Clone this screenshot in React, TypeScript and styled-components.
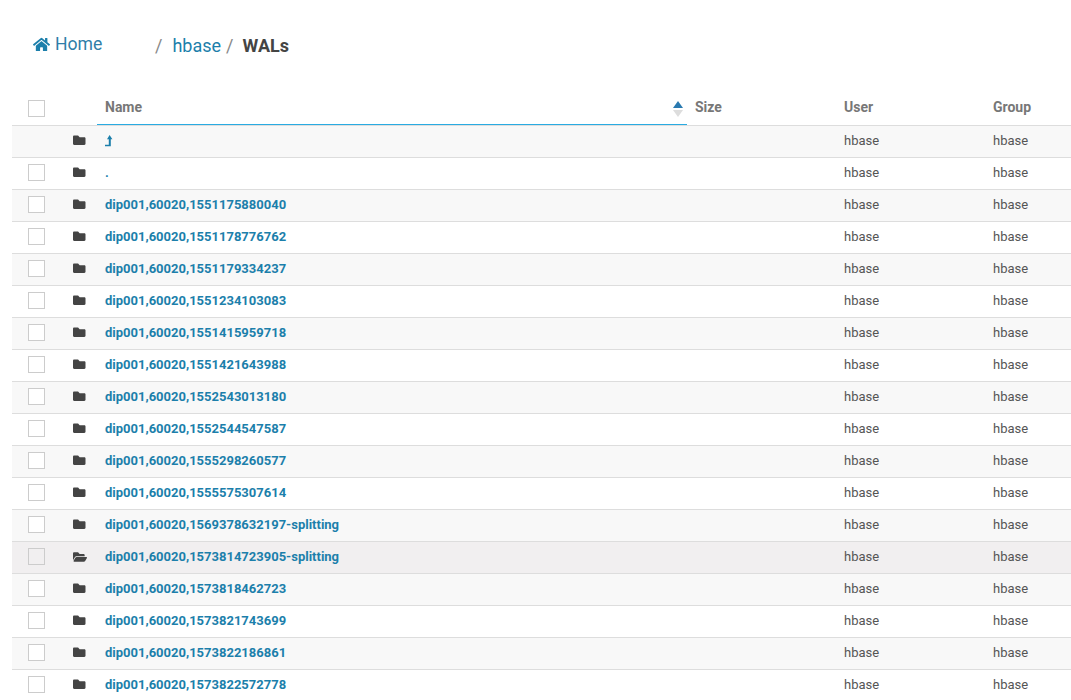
import React from "react";
import styled, { createGlobalStyle } from "styled-components";
import { FaHome, FaFolder, FaFolderOpen } from "react-icons/fa";

const GlobalStyle = createGlobalStyle`
  html, body {
    margin: 0;
    padding: 0;
    background: #fff;
    overflow: hidden;
    font-family: Roboto, "Liberation Sans", sans-serif;
    color: #444;
  }
`;

const Page = styled.div`
  height: 700px;
  overflow: hidden;
  padding: 0 0 0 12px;
`;

const Breadcrumb = styled.nav`
  display: flex;
  height: 95px;
  font-size: 18px;
  color: #777;
`;

const HomeLink = styled.a`
  display: flex;
  align-items: center;
  gap: 5px;
  width: 122px;
  height: 20px;
  margin: 34px 0 0 21px;
  font-size: 17.6px;
  color: #2f7ea8;
`;

const Crumbs = styled.div`
  display: flex;
  align-items: center;
  height: 21px;
  margin-top: 35px;
`;

const Slash = styled.span<{ $gap: number; $lead?: number }>`
  margin-left: ${(p) => p.$lead ?? 0}px;
  margin-right: ${(p) => p.$gap}px;
  color: #888;
`;

const CrumbLink = styled.a`
  color: #1c7fab;
`;

const Current = styled.strong`
  font-weight: 700;
  color: #444;
`;

const Row = styled.div<{ $stripe?: boolean; $hover?: boolean }>`
  display: grid;
  grid-template-columns: 49px 36px 590px 149px 149px 86px;
  align-items: center;
  height: 29px;
  padding-bottom: 2px;
  border-bottom: 1px solid #ddd;
  font-size: 13px;
  background: ${(p) => (p.$hover ? "#f1eff0" : p.$stripe ? "#f8f8f8" : "#fff")};
`;

const HeadRow = styled(Row)`
  grid-template-rows: 24px;
  height: 24px;
  padding-bottom: 6px;
  font-size: 14px;
`;

const CheckCell = styled.div<{ $head?: boolean }>`
  display: flex;
  padding-left: 16px;
  padding-top: ${(p) => (p.$head ? "3px" : "0")};
`;

const CheckBox = styled.span<{ $dim?: boolean }>`
  display: block;
  width: 15px;
  height: 15px;
  border: 1px solid #ccc;
  background: ${(p) => (p.$dim ? "transparent" : "#fff")};
`;

const IconCell = styled.div`
  display: flex;
  padding-left: 12px;
  color: #444;
  font-size: 12.5px;
`;

const HeadName = styled.div`
  position: relative;
  box-sizing: border-box;
  align-self: start;
  display: flex;
  align-items: center;
  height: 30px;
  padding: 0 0 6px 8px;
  font-weight: 700;
  color: #777;
  border-bottom: 1px solid #29abe2;
`;

const HeadCell = styled.div`
  padding-left: 8px;
  font-weight: 700;
  color: #777;
`;

const SortIcon = styled.svg`
  position: absolute;
  right: 4px;
  top: 6px;
`;

const NameCell = styled.a`
  display: flex;
  align-items: center;
  padding-left: 8px;
  font-weight: 700;
  color: #1c7fab;
`;

const Cell = styled.div`
  padding-left: 8px;
  color: #555;
`;

const names = [
  "dip001,60020,1551175880040",
  "dip001,60020,1551178776762",
  "dip001,60020,1551179334237",
  "dip001,60020,1551234103083",
  "dip001,60020,1551415959718",
  "dip001,60020,1551421643988",
  "dip001,60020,1552543013180",
  "dip001,60020,1552544547587",
  "dip001,60020,1555298260577",
  "dip001,60020,1555575307614",
  "dip001,60020,1569378632197-splitting",
  "dip001,60020,1573814723905-splitting",
  "dip001,60020,1573818462723",
  "dip001,60020,1573821743699",
  "dip001,60020,1573822186861",
  "dip001,60020,1573822572778",
];

const LevelUpIcon = () => (
  <svg width="9" height="12" viewBox="0 0 9 12" fill="currentColor">
    <path d="M4.6 0 L7.4 4.2 L5.8 4.2 L5.8 11.2 L0 11.2 L0 9.8 L3.8 9.8 L3.8 4.2 L2 4.2 Z" />
  </svg>
);

export default function App() {
  return (
    <Page>
      <GlobalStyle />
      <Breadcrumb>
        <HomeLink>
          <FaHome size={17} color="#1c7fab" />
          Home
        </HomeLink>
        <Crumbs>
          <Slash $gap={10}>/</Slash>
          <CrumbLink>hbase</CrumbLink>
          <Slash $gap={9} $lead={5}>/</Slash>
          <Current>WALs</Current>
        </Crumbs>
      </Breadcrumb>

      <HeadRow>
        <CheckCell $head>
          <CheckBox />
        </CheckCell>
        <div />
        <HeadName>
          Name
          <SortIcon width="10" height="16" viewBox="0 0 10 16">
            <path d="M5 0 L10 7 L0 7 Z" fill="#2a7ab0" />
            <path d="M0 9 L10 9 L5 16 Z" fill="#ddd" />
          </SortIcon>
        </HeadName>
        <HeadCell>Size</HeadCell>
        <HeadCell>User</HeadCell>
        <HeadCell>Group</HeadCell>
      </HeadRow>

      <Row $stripe>
        <div />
        <IconCell>
          <FaFolder />
        </IconCell>
        <NameCell>
          <LevelUpIcon />
        </NameCell>
        <div />
        <Cell>hbase</Cell>
        <Cell>hbase</Cell>
      </Row>

      <Row>
        <CheckCell>
          <CheckBox />
        </CheckCell>
        <IconCell>
          <FaFolder />
        </IconCell>
        <NameCell>.</NameCell>
        <div />
        <Cell>hbase</Cell>
        <Cell>hbase</Cell>
      </Row>

      {names.map((name, i) => {
        const hover = name.startsWith("dip001,60020,1573814723905");
        return (
          <Row key={name} $stripe={i % 2 === 0} $hover={hover}>
            <CheckCell>
              <CheckBox $dim={hover} />
            </CheckCell>
            <IconCell>{hover ? <FaFolderOpen size={14} /> : <FaFolder />}</IconCell>
            <NameCell>{name}</NameCell>
            <div />
            <Cell>hbase</Cell>
            <Cell>hbase</Cell>
          </Row>
        );
      })}
    </Page>
  );
}
